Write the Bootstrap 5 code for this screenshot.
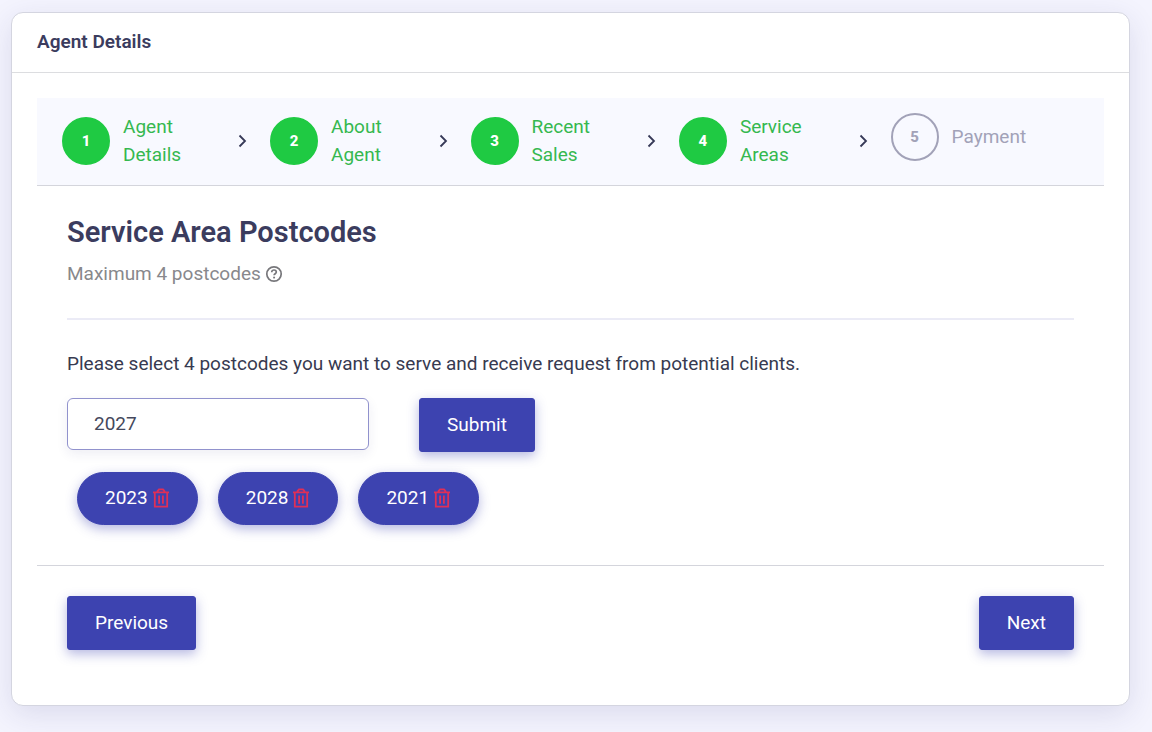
<!DOCTYPE html>
<html lang="en">
<head>
<meta charset="utf-8">
<meta name="viewport" content="width=device-width, initial-scale=1">
<title>Agent Details</title>
<link href="https://cdn.jsdelivr.net/npm/bootstrap@5.3.0/dist/css/bootstrap.min.css" rel="stylesheet">
<style>
  :root { --brand: #3d43b0; --ink: #3b3c5e; --done: #1fca43; --line: #d4d5dc; }
  body { background: #f4f4fe; color: #373a50; font-family: Roboto, "Liberation Sans", sans-serif; font-size: 19px; line-height: 28px; }
  .page { padding: 12px 22px 26px 11px; }
  .panel { border: 1px solid #d4d5e0; border-radius: 12px; box-shadow: 0 8px 30px rgba(40, 40, 110, .12); }
  .panel-head { padding: 15px 25px 16px; border-bottom: 1px solid #dcdde0; }
  .panel-head h1 { margin: 0; font-size: 19px; line-height: 28px; font-weight: 600; color: var(--ink); }
  .panel-main { padding: 25px 25px 55px; }
  .steps { padding: 15px 25px 16px; background: #f8f9ff; border-bottom: 1px solid var(--line); }
  .step { gap: 13px; color: #35b84f; text-decoration: none; }
  .step-no { width: 48px; height: 48px; flex: none; border: 2px solid var(--done); border-radius: 50%; background: var(--done); color: #fff; font-size: 15px; font-weight: 800; }
  .step.todo { color: #a2a2b8; }
  .step.todo .step-no { background: none; border-color: #a2a2b8; color: #a2a2b8; }
  .chev { width: 9px; height: 14px; margin: 0 23px 0 4px; flex: none; }
  .pane { padding: 30px; }
  .pane h2 { margin: 0 0 14px; font-size: 29px; line-height: 32px; font-weight: 600; color: var(--ink); }
  .hint { color: #88888c; line-height: 24px; }
  .rule { margin: 32px 0 30px; border: 0; border-top: 2px solid #ebebf6; opacity: 1; }
  .entry { gap: 50px; margin-top: 20px; }
  .code-box { width: 302px; height: 52px; padding: 0 26px 2px; border: 1px solid #9192cd; border-radius: 6px; font-size: 19px; color: #45485c; box-shadow: 0 4px 12px rgba(40, 40, 110, .08); }
  .btn-brand { --bs-btn-color: #fff; --bs-btn-bg: var(--brand); --bs-btn-border-color: var(--brand); --bs-btn-hover-color: #fff; --bs-btn-hover-bg: #33389a; --bs-btn-hover-border-color: #33389a; --bs-btn-active-color: #fff; --bs-btn-active-bg: #33389a; --bs-btn-padding-x: 27px; --bs-btn-padding-y: 12px; --bs-btn-font-size: 19px; --bs-btn-line-height: 28px; --bs-btn-border-radius: 3px; box-shadow: 0 4px 12px rgba(61, 67, 176, .38); }
  .tags { gap: 20px; margin: 20px 0 10px; padding: 0 10px; }
  .tag { --bs-btn-border-radius: 27px; --bs-btn-line-height: 27px; padding-top: 11px; padding-bottom: 13px; }
  .tag svg { width: 18px; height: 20px; margin-left: 4px; }
  .foot { padding: 30px 30px 0; border-top: 1px solid var(--line); }
</style>
</head>
<body>
<main class="page">
  <section class="panel bg-white">
    <header class="panel-head"><h1>Agent Details</h1></header>
    <div class="panel-main">
      <nav class="steps d-flex align-items-center" aria-label="Progress">
        <a href="#" class="step d-flex align-items-center flex-grow-1"><strong class="step-no d-flex align-items-center justify-content-center">1</strong><span>Agent<br>Details</span></a>
        <svg class="chev" viewBox="0 0 9 14" fill="none" stroke="#363957" stroke-width="1.8" aria-hidden="true"><path d="M1.5 1.5 7 7l-5.500 5.500"/></svg>
        <a href="#" class="step d-flex align-items-center flex-grow-1"><strong class="step-no d-flex align-items-center justify-content-center">2</strong><span>About<br>Agent</span></a>
        <svg class="chev" viewBox="0 0 9 14" fill="none" stroke="#363957" stroke-width="1.8" aria-hidden="true"><path d="M1.5 1.5 7 7l-5.500 5.500"/></svg>
        <a href="#" class="step d-flex align-items-center flex-grow-1"><strong class="step-no d-flex align-items-center justify-content-center">3</strong><span>Recent<br>Sales</span></a>
        <svg class="chev" viewBox="0 0 9 14" fill="none" stroke="#363957" stroke-width="1.8" aria-hidden="true"><path d="M1.5 1.5 7 7l-5.500 5.500"/></svg>
        <a href="#" class="step d-flex align-items-center flex-grow-1"><strong class="step-no d-flex align-items-center justify-content-center">4</strong><span>Service<br>Areas</span></a>
        <svg class="chev" viewBox="0 0 9 14" fill="none" stroke="#363957" stroke-width="1.8" aria-hidden="true"><path d="M1.5 1.5 7 7l-5.500 5.500"/></svg>
        <a href="#" class="step todo d-flex align-items-center align-self-start flex-grow-1"><strong class="step-no d-flex align-items-center justify-content-center">5</strong><span>Payment</span></a>
      </nav>
      <form class="pane" onsubmit="return false">
        <h2>Service Area Postcodes</h2>
        <div class="hint d-flex align-items-center gap-1">
          <span>Maximum 4 postcodes</span>
          <svg width="18" height="18" viewBox="0 0 18 18" fill="none" stroke="#77777b" stroke-width="1.7" aria-hidden="true"><circle cx="9" cy="9" r="7.200"/><path d="M6.700 7.300C6.700 5.900 7.700 5 9 5s2.300.9 2.300 2.100c0 1.600-2.200 1.700-2.200 3.200"/><path d="M9.100 11.700v1.700" stroke-width="1.9"/></svg>
        </div>
        <hr class="rule">
        <label for="postcode" class="d-block">Please select 4 postcodes you want to serve and receive request from potential clients.</label>
        <div class="entry d-flex align-items-start">
          <input id="postcode" class="code-box" type="text" value="2027">
          <button type="submit" class="btn btn-brand">Submit</button>
        </div>
        <div class="tags d-flex flex-wrap">
          <button type="button" class="btn btn-brand tag d-flex align-items-center">2023<svg viewBox="0 0 17 20" fill="none" stroke="#e02f57" stroke-width="1.8" aria-hidden="true"><path d="M.5 4.300h16M5 4V3.200L6.500 1.400h4L12 3.200V4M2.300 4.500v14.200h12.400V4.500M6.600 7.500v8.200M10.400 7.500v8.200"/></svg></button>
          <button type="button" class="btn btn-brand tag d-flex align-items-center">2028<svg viewBox="0 0 17 20" fill="none" stroke="#e02f57" stroke-width="1.8" aria-hidden="true"><path d="M.5 4.300h16M5 4V3.200L6.500 1.400h4L12 3.200V4M2.300 4.500v14.200h12.400V4.500M6.600 7.500v8.200M10.400 7.500v8.200"/></svg></button>
          <button type="button" class="btn btn-brand tag d-flex align-items-center">2021<svg viewBox="0 0 17 20" fill="none" stroke="#e02f57" stroke-width="1.8" aria-hidden="true"><path d="M.5 4.300h16M5 4V3.200L6.500 1.400h4L12 3.200V4M2.300 4.500v14.200h12.400V4.500M6.600 7.500v8.200M10.400 7.500v8.200"/></svg></button>
        </div>
      </form>
      <div class="foot d-flex justify-content-between">
        <button type="button" class="btn btn-brand">Previous</button>
        <button type="button" class="btn btn-brand">Next</button>
      </div>
    </div>
  </section>
</main>
<script src="https://cdn.jsdelivr.net/npm/bootstrap@5.3.0/dist/js/bootstrap.bundle.min.js"></script>
</body>
</html>
